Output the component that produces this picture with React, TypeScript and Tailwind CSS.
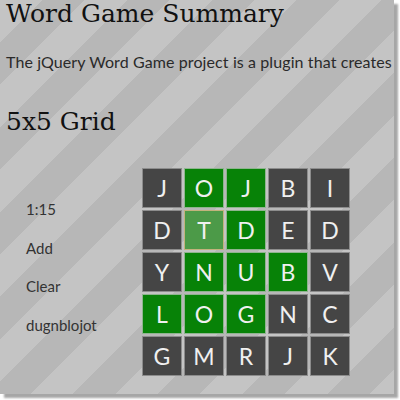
import React from "react";

type C = "d" | "g" | "h";
const rows: { l: string; c: C }[][] = [
  [{ l: "J", c: "d" }, { l: "O", c: "g" }, { l: "J", c: "g" }, { l: "B", c: "d" }, { l: "I", c: "d" }],
  [{ l: "D", c: "d" }, { l: "T", c: "h" }, { l: "D", c: "g" }, { l: "E", c: "d" }, { l: "D", c: "d" }],
  [{ l: "Y", c: "d" }, { l: "N", c: "g" }, { l: "U", c: "g" }, { l: "B", c: "g" }, { l: "V", c: "d" }],
  [{ l: "L", c: "g" }, { l: "O", c: "g" }, { l: "G", c: "g" }, { l: "N", c: "d" }, { l: "C", c: "d" }],
  [{ l: "G", c: "d" }, { l: "M", c: "d" }, { l: "R", c: "d" }, { l: "J", c: "d" }, { l: "K", c: "d" }],
];

const cellColor: Record<C, string> = {
  d: "bg-[#454545] border-[#8c8c8c]",
  g: "bg-[#078207] border-[#8fb48f]",
  h: "bg-[#4c9a48] border-[#c2b37c]",
};

function Cell({ l, c }: { l: string; c: C }) {
  return (
    <div
      className={`w-[40px] h-[40px] border flex items-center justify-center text-[23px] font-normal text-[#f0f0f0] font-['Lato',sans-serif] ${cellColor[c]}`}
    >
      {l}
    </div>
  );
}

export default function App() {
  return (
    <div className="w-[400px] h-[400px] bg-white">
      <div className="w-[394px] h-[394px] pl-[6px] pt-[2px] shadow-[4px_4px_2px_rgba(0,0,0,0.35)] bg-[repeating-linear-gradient(135deg,#c4c4c4_0px,#c4c4c4_30px,#b7b7b7_30px,#b7b7b7_60px)] text-[#222]">
        <div className="text-[25px] leading-[24px] text-[#111] font-['DejaVu_Serif',serif] whitespace-nowrap">
          Word Game Summary
        </div>
        <div className="mt-[26px] text-[16px] leading-[20px] tracking-[0.1px] text-[#2a2a2a] whitespace-nowrap font-['Lato',sans-serif]">
          The jQuery Word Game project is a plugin that creates
        </div>
        <div className="mt-[37px] text-[25px] leading-[26px] text-[#111] font-['DejaVu_Serif',serif]">
          5x5 Grid
        </div>
        <div className="mt-[33px] flex">
          <div className="w-[136px] pl-[20px] pt-[31px] flex flex-col gap-[18.5px] text-[15px] leading-[20px] text-[#333] font-['Lato',sans-serif]">
            <div>1:15</div>
            <div>Add</div>
            <div>Clear</div>
            <div>dugnblojot</div>
          </div>
          <div className="grid grid-cols-5 gap-[2px]">
            {rows.flat().map((cell, i) => (
              <Cell key={i} l={cell.l} c={cell.c} />
            ))}
          </div>
        </div>
      </div>
    </div>
  );
}
